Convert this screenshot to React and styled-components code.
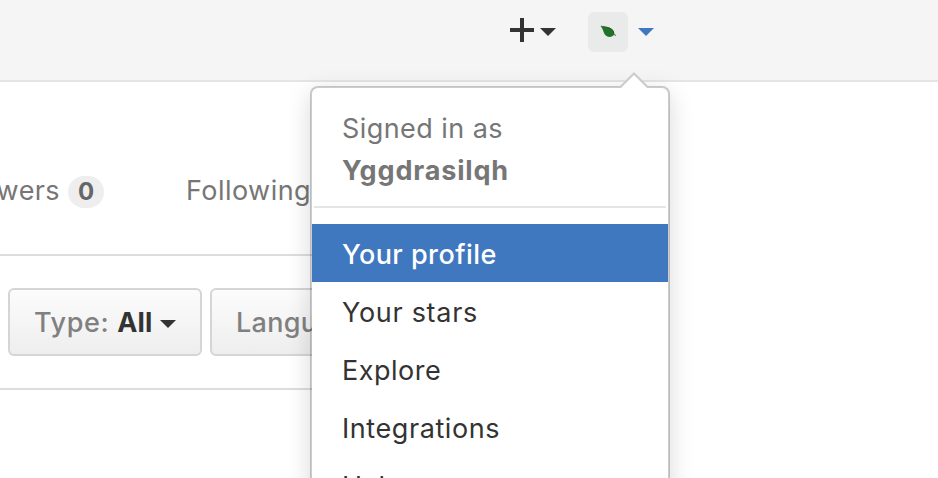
import React from "react";
import styled, { createGlobalStyle } from "styled-components";

const GlobalStyle = createGlobalStyle`
  * { box-sizing: border-box; }
  html, body { margin: 0; height: 100%; overflow: hidden; background: #fff; }
  body { font-family: Inter, "Liberation Sans", sans-serif; font-size: 27px; color: #333; }
`;

const Page = styled.div`
  width: 938px;
  height: 478px;
  overflow: hidden;
  background: #fff;
`;

const Header = styled.header`
  position: relative;
  z-index: 2;
  display: flex;
  align-items: flex-start;
  height: 82px;
  padding: 12px 0 0 510px;
  background: #f5f5f5;
  border-bottom: 2px solid #e5e5e5;
`;

const HeaderButton = styled.div`
  display: flex;
  align-items: center;
  height: 40px;
  color: ${(p) => p.$color || "#333"};
`;

const CreateButton = styled(HeaderButton)`
  width: 78px;
  padding-bottom: 4px;
  gap: 6px;
`;

const ProfileButton = styled(HeaderButton)`
  gap: 10px;
`;

const PlusIcon = styled.svg`
  display: block;
  width: 24px;
  height: 24px;
`;

const Caret = styled.span`
  width: 0;
  height: 0;
  margin-top: ${(p) => p.$drop || 0}px;
  border: 8px solid transparent;
  border-top-color: currentColor;
  border-bottom-width: 0;
`;

const Avatar = styled.svg`
  display: block;
  width: 40px;
  height: 40px;
  border-radius: 6px;
  background: #e8ebe9;
`;

const Menu = styled.div`
  position: absolute;
  top: 86px;
  left: 310px;
  width: 360px;
  height: 470px;
  background: #fff;
  background-clip: padding-box;
  border: 2px solid rgba(0, 0, 0, 0.2);
  border-radius: 8px;
  box-shadow: 0 6px 24px rgba(0, 0, 0, 0.15);
`;

const MenuArrow = styled.svg`
  position: absolute;
  top: -16px;
  right: 17px;
  width: 34px;
  height: 17px;
`;

const MenuHeader = styled.div`
  display: flex;
  flex-direction: column;
  margin: 0 2px;
  height: 120px;
  padding: 20px 0 0 28px;
  border-bottom: 2px solid #e5e5e5;
  color: #767676;
  line-height: 42px;
`;

const Label = styled.span`
  letter-spacing: ${(p) => p.$track || 0}px;
  font-weight: ${(p) => p.$weight || 440};
  white-space: nowrap;
`;

const MenuList = styled.nav`
  padding-top: 16px;
`;

const MenuItem = styled.div`
  display: flex;
  align-items: center;
  height: 58px;
  padding: 2px 0 0 30px;
  color: ${(p) => (p.$active ? "#fff" : "#333")};
  background: ${(p) => (p.$active ? "#4078c0" : "transparent")};
`;

const Content = styled.main`
  width: 640px;
`;

const Tabs = styled.nav`
  display: flex;
  align-items: flex-start;
  height: 174px;
  padding-top: 90px;
  border-bottom: 2px solid #ddd;
  color: #767676;
`;

const Tab = styled.div`
  display: flex;
  align-items: center;
  justify-content: flex-end;
  gap: 8px;
  height: 36px;
  width: ${(p) => p.$width || "auto"};
  margin-right: 82px;
  flex: none;
`;

const Counter = styled.span`
  display: flex;
  align-items: center;
  justify-content: center;
  width: 36px;
  height: 32px;
  margin-top: 4px;
  flex: none;
  border-radius: 20px;
  background: #eee;
  color: #666;
  font-size: 24px;
  font-weight: 650;
  line-height: 30px;
  padding-bottom: 1px;
`;

const Filters = styled.div`
  display: flex;
  gap: 8px;
  height: 134px;
  padding: 32px 0 0 8px;
  border-bottom: 2px solid #ddd;
`;

const FilterButton = styled.div`
  display: flex;
  align-items: center;
  width: 194px;
  height: 68px;
  padding: 0 0 0 24px;
  border: 2px solid #d5d5d5;
  border-radius: 6px;
  background: linear-gradient(#fcfcfc, #eee);
  color: #333;
`;

const FilterName = styled(Label)`
  margin-right: 8px;
  color: #808080;
`;

const FilterValue = styled(Label)`
  margin-right: 7px;
`;

const ITEMS = [
  { name: "Your profile", track: 0.45, weight: 520, active: true },
  { name: "Your stars", track: 0.7 },
  { name: "Explore", track: 0.5 },
  { name: "Integrations", track: 0.58 },
  { name: "Help", track: 0.4 },
];

function ProfileMenu() {
  return (
    <Menu>
      <MenuArrow viewBox="0 0 34 17">
        <path d="M1 16 17 0 33 16Z" fill="#ccc" />
        <path d="M3 17 17 3 31 17Z" fill="#fff" />
      </MenuArrow>
      <MenuHeader>
        <Label $track={0.43}>Signed in as</Label>
        <Label $track={0.83} $weight={650}>Yggdrasilqh</Label>
      </MenuHeader>
      <MenuList>
        {ITEMS.map((item) => (
          <MenuItem key={item.name} $active={item.active}>
            <Label $track={item.track} $weight={item.weight}>{item.name}</Label>
          </MenuItem>
        ))}
      </MenuList>
    </Menu>
  );
}

export default function App() {
  return (
    <Page>
      <GlobalStyle />
      <Header>
        <CreateButton>
          <PlusIcon viewBox="0 0 24 24">
            <path d="M10 0h4v10h10v4H14v10h-4V14H0v-4h10z" fill="currentColor" />
          </PlusIcon>
          <Caret $drop={4} />
        </CreateButton>
        <ProfileButton $color="#4078c0">
          <Avatar viewBox="0 0 40 40">
            <path d="M12.8 14.2C16 15.2 20 14.5 23 16.2C26 18 27 20.5 25.8 23C23.5 25.8 19 25.5 16.8 22.5C15.2 20 15.2 17 12.8 14.2Z" fill="#217326" />
            <path d="M12.8 14.2Q18.5 14.5 22.5 16.5Q26 19 26 22.5L28 23.5" fill="none" stroke="#344a37" strokeWidth="0.8" />
          </Avatar>
          <Caret />
        </ProfileButton>
        <ProfileMenu />
      </Header>
      <Content>
        <Tabs>
          <Tab $width="104px">
            <Label $track={0.4}>Followers</Label>
            <Counter>0</Counter>
          </Tab>
          <Tab>
            <Label $track={0.45}>Following</Label>
          </Tab>
        </Tabs>
        <Filters>
          <FilterButton>
            <FilterName $weight={500} $track={0.6}>Type:</FilterName>
            <FilterValue $weight={650} $track={0.2}>All</FilterValue>
            <Caret $drop={3} />
          </FilterButton>
          <FilterButton>
            <FilterName $weight={500} $track={0.3}>Language:</FilterName>
          </FilterButton>
        </Filters>
      </Content>
    </Page>
  );
}
